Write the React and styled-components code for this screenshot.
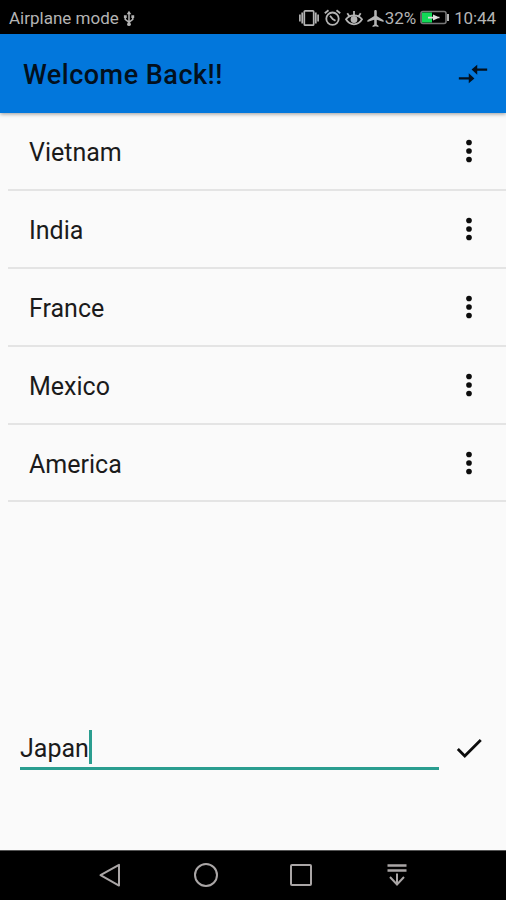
import React, { Component } from 'react';
import styled, { createGlobalStyle } from 'styled-components';

const GlobalStyle = createGlobalStyle`
  body {
    margin: 0;
    background: #fafafa;
    font-family: Roboto, 'Noto Sans', sans-serif;
  }
  * {
    box-sizing: border-box;
  }
  svg {
    display: block;
    flex: none;
  }
`

const Screen = styled.div`
  width: 506px;
  height: 900px;
  display: flex;
  flex-direction: column;
  overflow: hidden;
  background: #fafafa;
`

const StatusBar = styled.div`
  flex: none;
  height: 34px;
  padding: 2px 10px 0 9px;
  display: flex;
  align-items: center;
  background: #000;
  color: #b4b4b4;
`

const StatusText = styled.span`
  font-size: ${props => props.$size || 17}px;
  letter-spacing: ${props => props.$spacing || 0}px;
  line-height: 24px;
  white-space: nowrap;
`

const StatusIcons = styled.div`
  margin-left: auto;
  display: flex;
  align-items: center;
`

const StatusIcon = styled.svg`
  margin-right: ${props => props.$gap || 0}px;
`

const AppBar = styled.header`
  flex: none;
  z-index: 1;
  height: 79px;
  padding: 0 16px 0 23px;
  display: flex;
  align-items: center;
  justify-content: space-between;
  background: #0277dc;
  box-shadow: 0 1px 4px rgba(0, 0, 0, 0.4);
`

const Title = styled.h1`
  margin: 3px 0 0;
  font-size: 27px;
  font-weight: 500;
  line-height: 36px;
  letter-spacing: 0.5px;
  color: #03101d;
`

const List = styled.ul`
  flex: 1;
  margin: 0;
  padding: 0 0 0 8px;
  list-style: none;
`

const Row = styled.li`
  height: 77.9px;
  padding: 0 20px 0 21px;
  display: flex;
  align-items: center;
  justify-content: space-between;
  border-bottom: 2px solid #e4e4e4;
`

const Name = styled.span`
  padding-top: 5px;
  font-size: 25px;
  line-height: 32px;
  color: #1b1b1b;
`

const AddBar = styled.div`
  flex: none;
  height: 120px;
  padding: 0 20px;
  display: flex;
  align-items: flex-start;
  justify-content: space-between;
`

const Field = styled.div`
  width: 419px;
  height: 40px;
  display: flex;
  align-items: flex-start;
  border-bottom: 3px solid #2a9d8f;
  color: #1b1b1b;
  font-size: 25px;
  line-height: 38px;
`

const Caret = styled.span`
  width: 3px;
  height: 34px;
  background: #2a9d8f;
`

const Confirm = styled.div`
  padding-top: 1px;
`

const NavBar = styled.nav`
  flex: none;
  height: 50px;
  padding: 0 61px 2px 62px;
  display: flex;
  align-items: center;
  justify-content: space-around;
  background: #000;
  border-top: 1px solid #555;
`

const UsbIcon = () => (
  <svg width="12" height="17" viewBox="0 0 12 18" fill="none" stroke="#b4b4b4" strokeWidth="1.6">
    <path d="M6 3v12M2 7v3l4 3 4-3V7" />
    <path d="M3.5 4.5L6 .8l2.5 3.700z" fill="#b4b4b4" stroke="none" />
    <path d="M.6 5.500h3v3h-3zM8.500 5.500h3v3h-3z" fill="#b4b4b4" stroke="none" />
    <circle cx="6" cy="15" r="2" fill="#b4b4b4" stroke="none" />
  </svg>
)

const VibrateIcon = () => (
  <StatusIcon $gap={5} width="20" height="18" viewBox="0 0 20 18" fill="none" stroke="#b4b4b4" strokeWidth="1.7">
    <rect x="5.300" y="1.800" width="9.400" height="14.400" rx="1" />
    <path d="M3.200 3.500v11M16.800 3.500v11M.9 5.500v7M19.100 5.500v7" />
  </StatusIcon>
)

const AlarmIcon = () => (
  <StatusIcon $gap={4} width="17" height="18" viewBox="0 0 17 18" fill="none" stroke="#b4b4b4" strokeWidth="1.8">
    <circle cx="8.500" cy="9.700" r="6.200" />
    <path d="M.8 4.200L4.500 1.200M16.200 4.200L12.500 1.200M6 6.700l2.700 3.400 2.800 1.600" />
  </StatusIcon>
)

const EyeIcon = () => (
  <StatusIcon $gap={4} width="18" height="18" viewBox="0 0 18 18" fill="none" stroke="#b4b4b4" strokeWidth="1.8">
    <path d="M1 10.300c2-2.800 4.800-4 8-4s6 1.200 8 4c-2 3.400-4.800 5-8 5s-6-1.600-8-5z" />
    <path d="M9 6.500V2M4.500 7.500L2.300 4.200M13.500 7.500l2.200-3.300" />
    <circle cx="9" cy="10.500" r="2.500" fill="#b4b4b4" />
  </StatusIcon>
)

const PlaneIcon = () => (
  <StatusIcon $gap={1} width="17" height="17" viewBox="2 2 19 20" fill="#b4b4b4">
    <path d="M21 16v-2l-8-5V3.500C13 2.670 12.330 2 11.500 2S10 2.670 10 3.500V9l-8 5v2l8-2.500V19l-2 1.500V22l3.500-1 3.500 1v-1.500L13 19v-5.500l8 2.500z" />
  </StatusIcon>
)

const BatteryIcon = () => (
  <StatusIcon $gap={5} width="29" height="16" viewBox="0 0 29 16">
    <rect x="1" y="1.500" width="25" height="12" rx="2" fill="none" stroke="#777" strokeWidth="1.600" />
    <rect x="27" y="4" width="2" height="7" fill="#b4b4b4" />
    <rect x="2" y="2.500" width="10" height="10" fill="#12d957" />
    <path d="M8 6.800h5V4.400l5 2.300v1.600l-5 2.300V8.400H8zM17 6.800h2.500v1.500H17z" fill="#ddd" />
  </StatusIcon>
)

const CompareIcon = () => (
  <svg width="34" height="34" viewBox="0 0 24 24" fill="#03101d">
    <path d="M9.010 14.300H2v1.600h7.010v2.700L13 15.100l-3.990-3.700v2.900zM14.990 9.700H22V8.100h-7.010V5.400L11 8.900l3.990 3.700z" />
  </svg>
)

const MoreIcon = () => (
  <svg width="34" height="34" viewBox="0 0 24 24" fill="#0c0c0c">
    <circle cx="12" cy="6" r="2" />
    <circle cx="12" cy="12" r="2" />
    <circle cx="12" cy="18" r="2" />
  </svg>
)

const CheckIcon = () => (
  <svg width="34" height="34" viewBox="0 0 24 24" fill="#0c0c0c">
    <path d="M9 16.170L4.830 12l-1.420 1.410L9 19 21 7l-1.410-1.410z" />
  </svg>
)

const NavIcon = ({ children }) => (
  <svg width="28" height="28" viewBox="0 0 28 28" fill="none" stroke="#aaa6a6" strokeWidth="2">
    {children}
  </svg>
)

class App extends Component {

  constructor(props){
    super(props)
    this.state = {
      countries : ['Vietnam','India','France','Mexico','America'],
      text : "Japan"
    }
  }

  render() {
    return (
      <Screen>
        <GlobalStyle />
        <StatusBar>
          <StatusText $size={17}>Airplane mode&nbsp;</StatusText>
          <UsbIcon />
          <StatusIcons>
            <VibrateIcon />
            <AlarmIcon />
            <EyeIcon />
            <PlaneIcon />
            <StatusText $size={17} $spacing={-0.1}>32%&nbsp;</StatusText>
            <BatteryIcon />
            <StatusText $size={17} $spacing={-0.1}>10:44</StatusText>
          </StatusIcons>
        </StatusBar>
        <AppBar>
          <Title>Welcome Back!!</Title>
          <CompareIcon />
        </AppBar>
        <List>
          {this.state.countries.map(country => (
            <Row key={country}>
              <Name>{country}</Name>
              <MoreIcon />
            </Row>
          ))}
        </List>
        <AddBar>
          <Field>
            {this.state.text}
            <Caret />
          </Field>
          <Confirm>
            <CheckIcon />
          </Confirm>
        </AddBar>
        <NavBar>
          <NavIcon><path d="M4.500 14.200L23 3.800v20.800z" strokeLinejoin="round" /></NavIcon>
          <NavIcon><circle cx="14" cy="14" r="11" /></NavIcon>
          <NavIcon><rect x="4" y="4" width="20" height="20" rx="1" /></NavIcon>
          <NavIcon>
            <path d="M4.500 4.500h19M4.500 9.500h19" strokeWidth="2.600" />
            <path d="M14 12.500v11M7 16l7 7.500 7-7.500" />
          </NavIcon>
        </NavBar>
      </Screen>
    );
  }
}

export default App;
